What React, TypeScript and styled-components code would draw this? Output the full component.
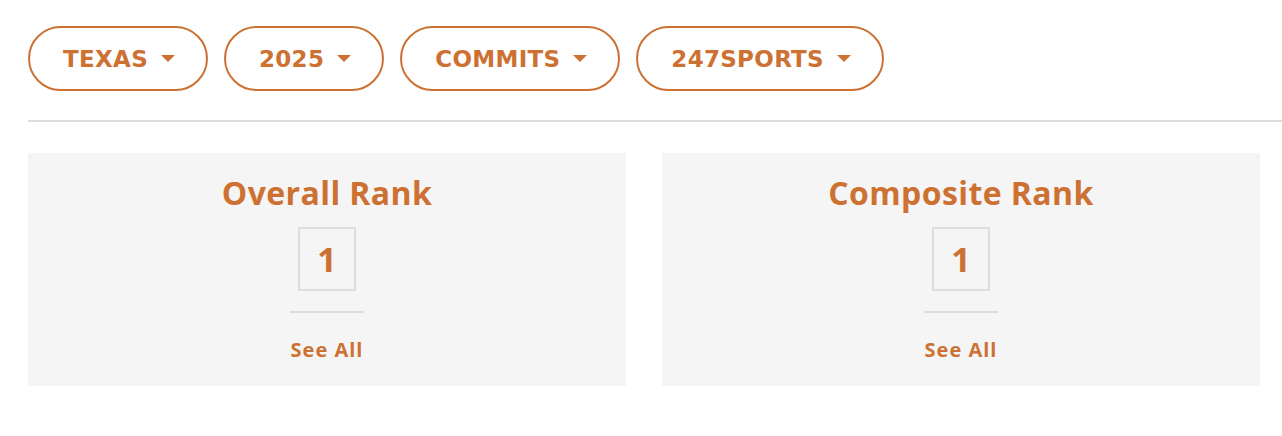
import React from "react";
import styled, { createGlobalStyle } from "styled-components";

const ORANGE = "#cd7133";
const FONT = `"Open Sans", Lato, Arial, sans-serif`;
const CAPS_FONT = `"DejaVu Sans", "Open Sans", Arial, sans-serif`;

const Global = createGlobalStyle`
  html, body { margin: 0; padding: 0; background: #fff; }
  body { font-family: ${FONT}; }
`;

const Page = styled.div`
  padding: 26px 0 0 28px;
  box-sizing: border-box;
  width: 1282px;
`;

const Filters = styled.div`
  display: flex;
  gap: 16px;
`;

const FilterButton = styled.button`
  display: flex;
  align-items: center;
  gap: 13px;
  height: 65px;
  padding: 0 31px 0 33px;
  border: 2px solid ${ORANGE};
  border-radius: 33px;
  background: #fff;
  color: ${ORANGE};
  font-family: ${CAPS_FONT};
  font-weight: 700;
  font-size: 23px;
  letter-spacing: 0.3px;
  cursor: pointer;
`;

const Caret = styled.span`
  width: 0;
  height: 0;
  border-left: 7.5px solid transparent;
  border-right: 7.5px solid transparent;
  border-top: 7px solid ${ORANGE};
`;

const Divider = styled.hr`
  border: none;
  height: 2px;
  background: #dddddd;
  margin: 29px 0 31px 0;
`;

const Cards = styled.div`
  display: grid;
  grid-template-columns: 1fr 1fr;
  gap: 36px;
  margin-right: 22px;
`;

const Card = styled.div`
  background: #f5f5f5;
  display: flex;
  flex-direction: column;
  align-items: center;
  padding: 20px 0 24px;
`;

const Title = styled.div`
  color: ${ORANGE};
  font-weight: 700;
  font-size: 32px;
  line-height: 40px;
  letter-spacing: 0.4px;
`;

const RankBox = styled.div`
  margin-top: 14px;
  width: 58px;
  height: 64px;
  box-sizing: border-box;
  border: 2px solid #dddddd;
  display: flex;
  align-items: center;
  justify-content: center;
  color: ${ORANGE};
  font-weight: 700;
  font-size: 34px;
`;

const Rule = styled.div`
  margin-top: 20px;
  width: 74px;
  height: 2px;
  background: #dddddd;
`;

const SeeAll = styled.a`
  margin-top: 25px;
  color: ${ORANGE};
  font-weight: 700;
  font-size: 20px;
  line-height: 24px;
  letter-spacing: 1px;
  text-decoration: none;
`;

const filters = ["TEXAS", "2025", "COMMITS", "247SPORTS"];
const ranks = [
  { title: "Overall Rank", value: 1 },
  { title: "Composite Rank", value: 1 },
];

export default function App() {
  return (
    <>
      <Global />
      <Page>
        <Filters>
          {filters.map((f) => (
            <FilterButton key={f}>
              {f}
              <Caret />
            </FilterButton>
          ))}
        </Filters>
        <Divider />
        <Cards>
          {ranks.map((r) => (
            <Card key={r.title}>
              <Title>{r.title}</Title>
              <RankBox>{r.value}</RankBox>
              <Rule />
              <SeeAll href="#">See All</SeeAll>
            </Card>
          ))}
        </Cards>
      </Page>
    </>
  );
}
